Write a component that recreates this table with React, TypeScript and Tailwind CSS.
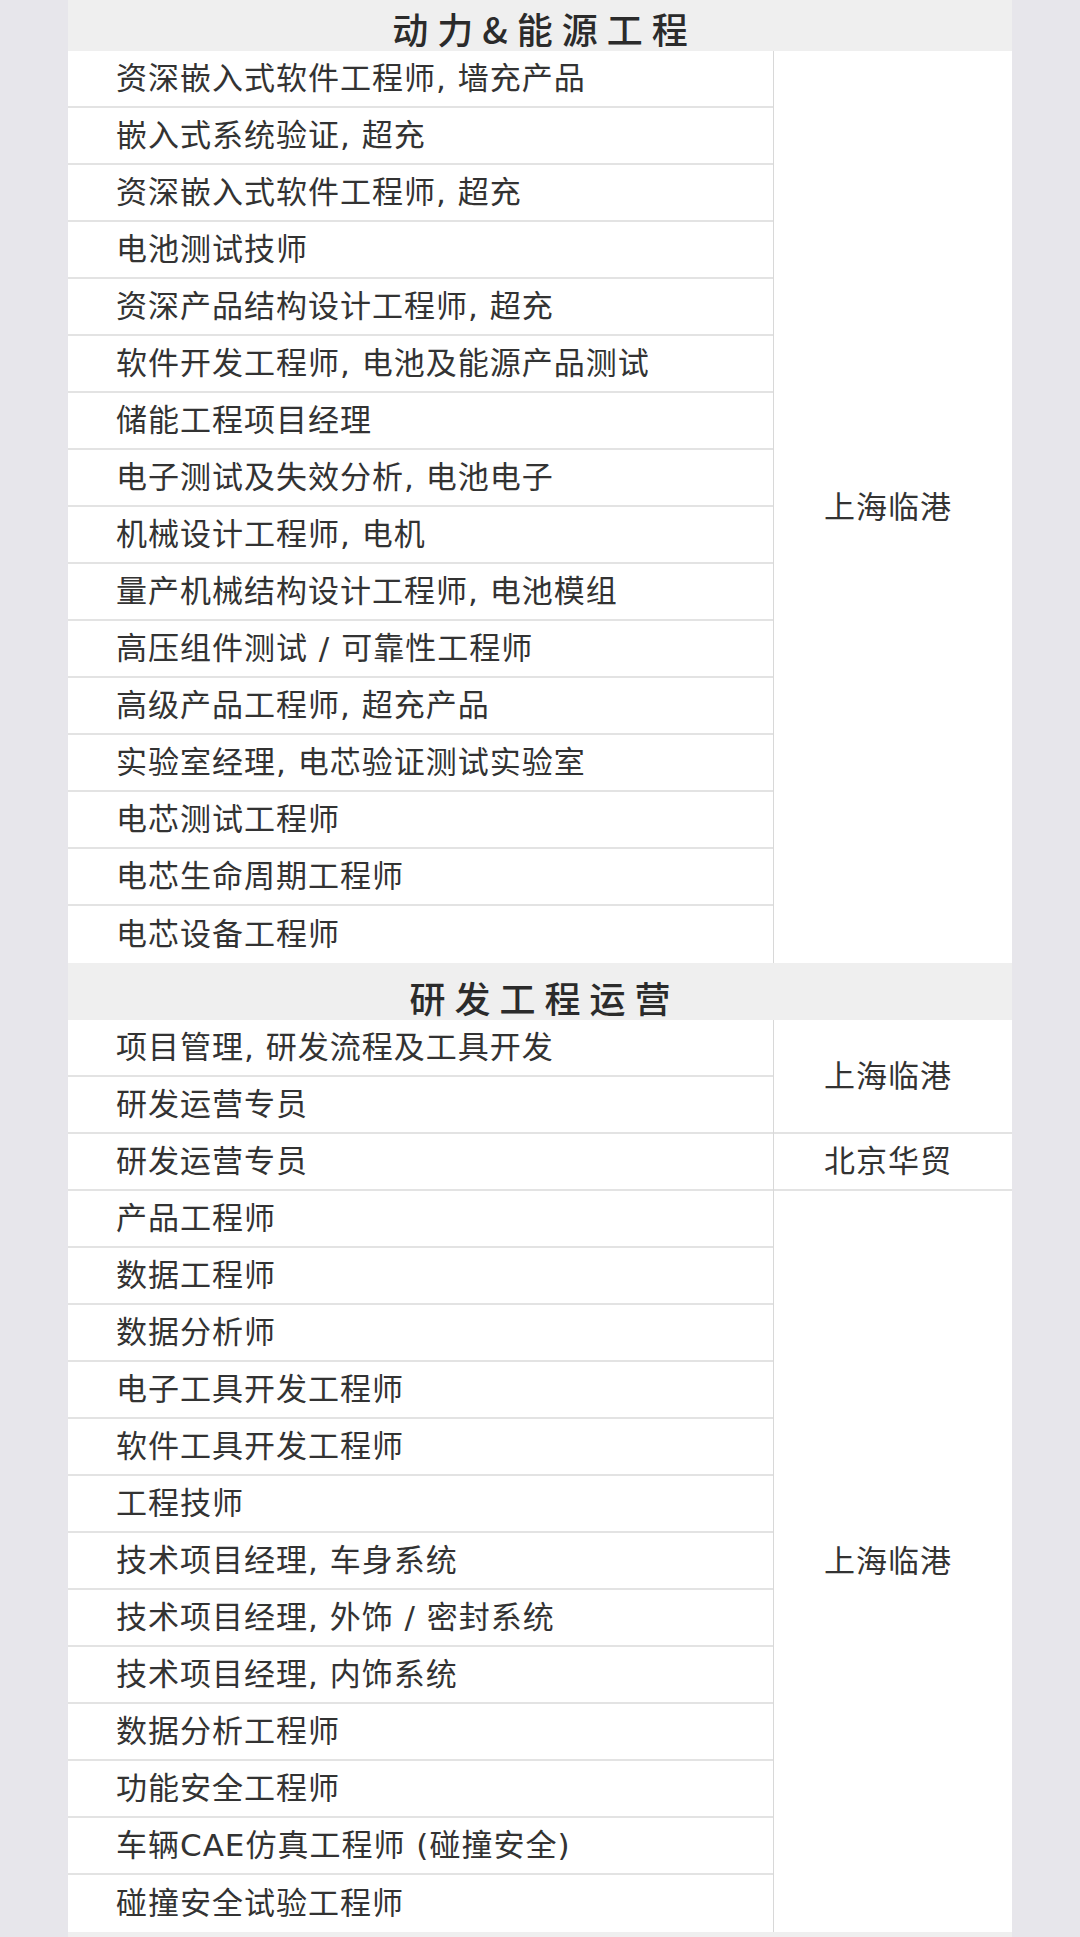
type Group = { city: string; roles: string[] };
type Section = { title: string; groups: Group[] };

const SECTIONS: Section[] = [
  {
    title: "动力&能源工程",
    groups: [
      {
        city: "上海临港",
        roles: [
          "资深嵌入式软件工程师, 墙充产品",
          "嵌入式系统验证, 超充",
          "资深嵌入式软件工程师, 超充",
          "电池测试技师",
          "资深产品结构设计工程师, 超充",
          "软件开发工程师, 电池及能源产品测试",
          "储能工程项目经理",
          "电子测试及失效分析, 电池电子",
          "机械设计工程师, 电机",
          "量产机械结构设计工程师, 电池模组",
          "高压组件测试 / 可靠性工程师",
          "高级产品工程师, 超充产品",
          "实验室经理, 电芯验证测试实验室",
          "电芯测试工程师",
          "电芯生命周期工程师",
          "电芯设备工程师",
        ],
      },
    ],
  },
  {
    title: "研发工程运营",
    groups: [
      { city: "上海临港", roles: ["项目管理, 研发流程及工具开发", "研发运营专员"] },
      { city: "北京华贸", roles: ["研发运营专员"] },
      {
        city: "上海临港",
        roles: [
          "产品工程师",
          "数据工程师",
          "数据分析师",
          "电子工具开发工程师",
          "软件工具开发工程师",
          "工程技师",
          "技术项目经理, 车身系统",
          "技术项目经理, 外饰 / 密封系统",
          "技术项目经理, 内饰系统",
          "数据分析工程师",
          "功能安全工程师",
          "车辆CAE仿真工程师 (碰撞安全)",
          "碰撞安全试验工程师",
        ],
      },
    ],
  },
];

const FONT = "[font-family:'DejaVu_Sans','Noto_Sans_CJK_SC',sans-serif]";

function SectionHeader({ title, first }: { title: string; first?: boolean }) {
  return (
    <div
      className={`flex h-[57px] items-center justify-center bg-[#efefef] pl-[9px] pt-[10px] ${
        first ? "-mt-[6px]" : ""
      }`}
    >
      <span className="text-[36px] font-medium leading-none tracking-[9px] text-[#2b2b2b] [font-family:'Noto_Sans_CJK_SC',sans-serif]">
        {title}
      </span>
    </div>
  );
}

// rows carry the dividing line; the group's last row only drops it at the end of a section
function GroupBlock({ group, last }: { group: Group; last: boolean }) {
  return (
    <div className="flex">
      <div className="w-[706px] border-r border-[#d8d8d8]">
        {group.roles.map((role, i) => {
          const lastRow = last && i === group.roles.length - 1;
          return (
            <div
              key={i}
              className={`flex h-[57px] items-center pl-[48px] ${
                lastRow ? "" : "border-b-2 border-[#e3e3e3]"
              }`}
            >
              <span className="text-[31px] leading-none tracking-[1px] text-[#333333] whitespace-nowrap">
                {role}
              </span>
            </div>
          );
        })}
      </div>
      <div
        className={`flex flex-1 items-center justify-center pr-[10px] ${
          last ? "" : "border-b-2 border-[#e3e3e3]"
        }`}
      >
        <span className="text-[31px] leading-none tracking-[1px] text-[#333333]">{group.city}</span>
      </div>
    </div>
  );
}

export default function App() {
  return (
    <div className={`min-h-[1937px] overflow-hidden bg-[#e7e6eb] ${FONT}`}>
      <div className="mx-auto w-[944px] bg-white">
        {SECTIONS.map((s, si) => (
          <div key={s.title}>
            <SectionHeader title={s.title} first={si === 0} />
            {s.groups.map((g, gi) => (
              <GroupBlock key={gi} group={g} last={gi === s.groups.length - 1} />
            ))}
          </div>
        ))}
        <div className="h-[57px] bg-[#efefef]" />
      </div>
    </div>
  );
}
